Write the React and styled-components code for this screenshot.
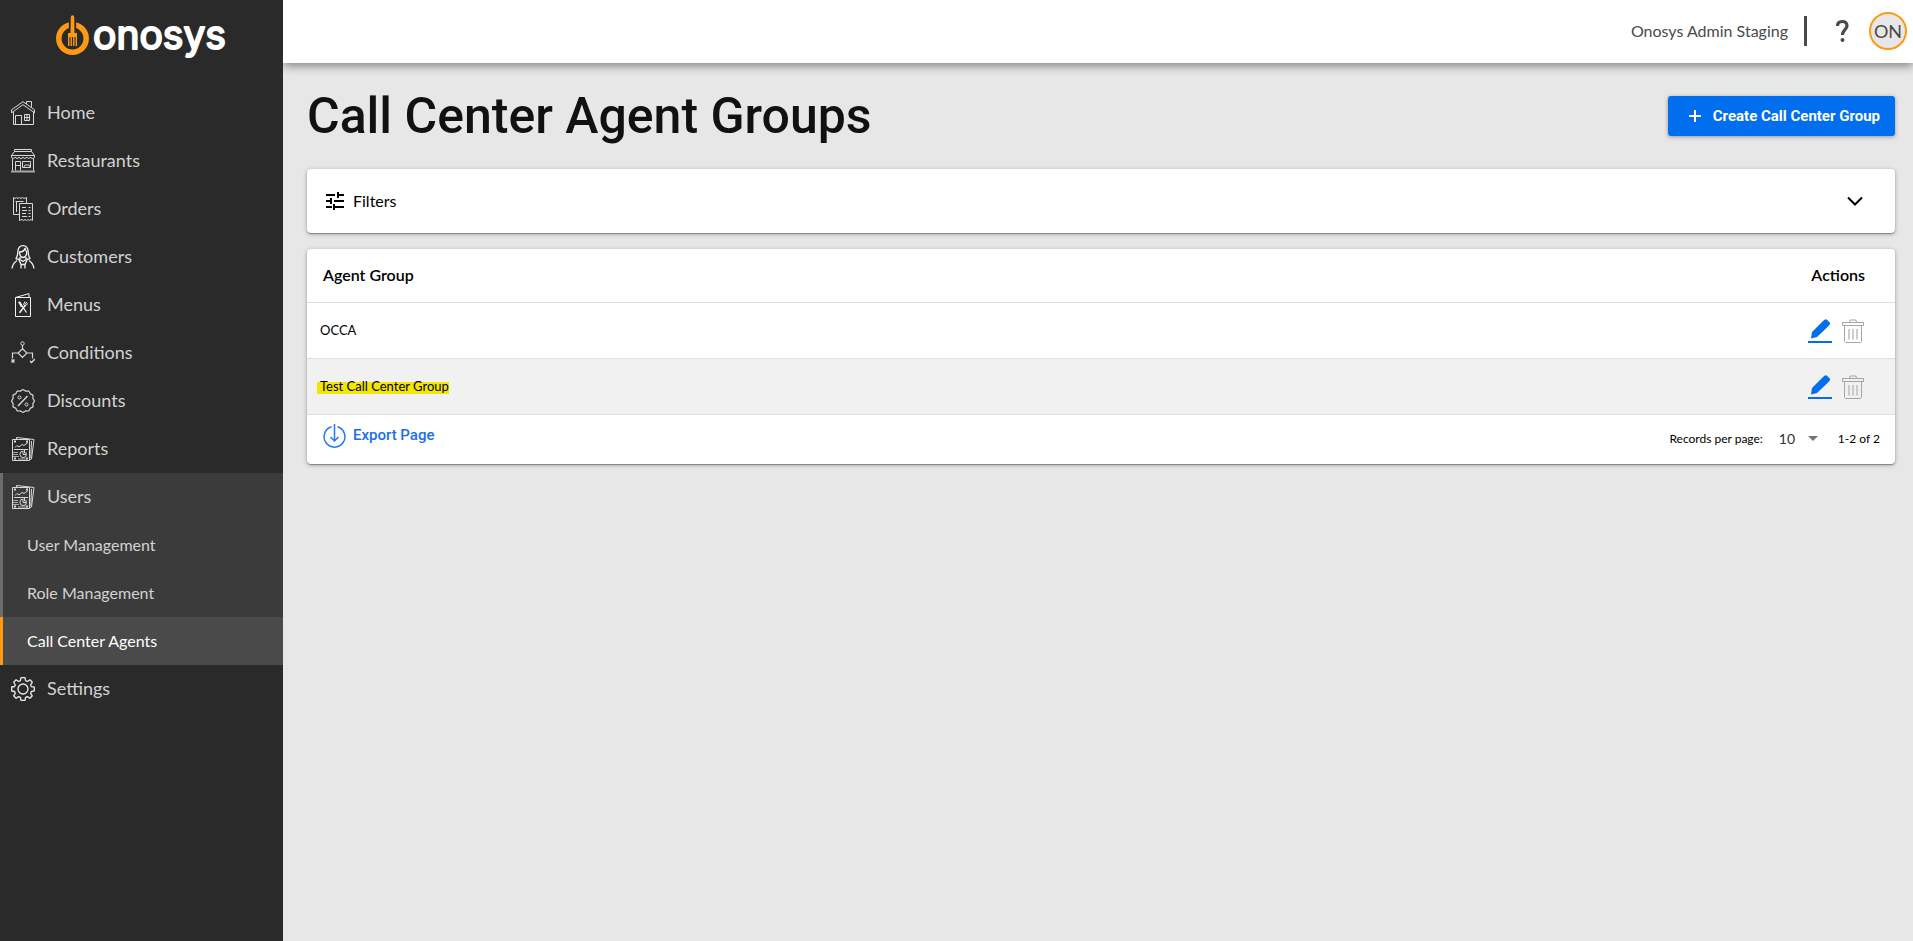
import React from "react";
import styled, { createGlobalStyle, css } from "styled-components";

const GlobalStyle = createGlobalStyle`
  *, *::before, *::after { box-sizing: border-box; }
  body {
    margin: 0;
    background: #e7e7e7;
    color: #000;
    font-family: Lato, "Liberation Sans", sans-serif;
    font-size: 16px;
  }
  button, select { font: inherit; color: inherit; }
  h1, ul { margin: 0; padding: 0; }
`;

const headingFont = css`
  font-family: Roboto, "Liberation Sans", sans-serif;
`;

const Shell = styled.div`
  display: flex;
  min-height: 100vh;
`;

const Sidebar = styled.aside`
  flex: 0 0 283px;
  background: #2a2a2a;
  color: #d2d2d2;
`;

const LogoLink = styled.a`
  display: flex;
  justify-content: center;
  height: 89px;
  padding-top: 12px;
`;

const NavList = styled.ul`
  list-style: none;
`;

const NavGroup = styled.li`
  background: ${(p) => (p.$open ? "#3b3b3b" : "transparent")};
`;

const NavLink = styled.a`
  display: flex;
  align-items: center;
  gap: 12px;
  height: 48px;
  padding-left: 8px;
  border-left: 3px solid ${(p) => (p.$open ? "#6c6c6c" : "transparent")};
  color: inherit;
  font-size: 18px;
  line-height: 24px;
  text-decoration: none;
`;

const NavLabel = styled.span`
  padding-bottom: 2px;
`;

const SubLink = styled(NavLink)`
  padding-left: 24px;
  font-size: 16px;
  border-left-color: ${(p) => (p.$active ? "#ff9914" : "#6c6c6c")};
  background: ${(p) => (p.$active ? "#4a4a4a" : "transparent")};
  color: ${(p) => (p.$active ? "#fff" : "inherit")};
`;

const Content = styled.div`
  flex: 1;
  min-width: 0;
`;

const TopBar = styled.header`
  display: flex;
  align-items: center;
  justify-content: flex-end;
  height: 63px;
  padding: 0 6px 2px 0;
  background: #fff;
  color: #4a4a4a;
  box-shadow: 0 2px 10px rgba(0, 0, 0, 0.5);
  clip-path: inset(0 0 -12px 0);
`;

const Divider = styled.span`
  width: 3px;
  height: 30px;
  margin: 0 25px 0 16px;
  background: #4a4a4a;
`;

const HelpButton = styled.button`
  display: flex;
  padding: 0;
  border: 0;
  background: none;
  margin-right: 17px;
`;

const Avatar = styled.button`
  width: 38px;
  height: 38px;
  padding: 0;
  border: 2px solid #ff9914;
  border-radius: 50%;
  background: #e7e7e7;
  font-size: 18px;
  line-height: 32px;
`;

const Main = styled.main`
  display: flex;
  flex-direction: column;
  gap: 16px;
  padding: 24px 18px 24px 24px;
`;

const TitleRow = styled.div`
  display: flex;
  align-items: flex-start;
  justify-content: space-between;
  height: 66px;
`;

const Title = styled.h1`
  ${headingFont}
  color: #111;
  font-size: 50px;
  font-weight: 500;
  line-height: 58px;
`;

const CreateButton = styled.button`
  ${headingFont}
  display: flex;
  align-items: center;
  gap: 12px;
  height: 40px;
  margin-top: 9px;
  padding: 0 15px 0 21px;
  border: 0;
  border-radius: 3px;
  background: #006eef;
  color: #fff;
  font-size: 15px;
  font-weight: 700;
  box-shadow: 0 1px 4px rgba(0, 0, 0, 0.35);
`;

const Card = styled.section`
  background: #fff;
  border-radius: 4px;
  box-shadow: 0 1px 4px rgba(0, 0, 0, 0.3), 0 1px 1px rgba(0, 0, 0, 0.3);
`;

const FilterToggle = styled.button`
  display: flex;
  align-items: center;
  gap: 9px;
  width: 100%;
  height: 64px;
  padding: 0 32px 1px 19px;
  border: 0;
  background: none;

  svg:last-child { margin-left: auto; }
`;

const Table = styled.table`
  width: 100%;
  border-collapse: collapse;
`;

const HeadCell = styled.th`
  height: 53px;
  padding: 0 30px 2px 16px;
  border-bottom: 1px solid #dedede;
  font-weight: 600;
  text-align: ${(p) => p.$align || "left"};
`;

const Cell = styled.td`
  height: 56px;
  padding: 0 30px 0 13px;
  border-bottom: 1px solid #dedede;
  font-size: 13px;
`;

const Row = styled.tr`
  background: ${(p) => (p.$striped ? "#f1f1f1" : "#fff")};
`;

const Highlight = styled.mark`
  margin-left: -3px;
  padding-left: 3px;
  color: inherit;
  background: linear-gradient(transparent 4px, #f3e600 4px);
`;

const Actions = styled.div`
  display: flex;
  justify-content: flex-end;
  gap: 9px;
  padding-top: 2px;
`;

const IconButton = styled.button`
  display: flex;
  padding: 0;
  border: 0;
  background: none;
`;

const Footer = styled.footer`
  display: flex;
  justify-content: space-between;
  height: 49px;
  padding: 0 15px 0 16px;
`;

const ExportButton = styled.button`
  ${headingFont}
  display: flex;
  align-items: flex-start;
  gap: 6px;
  padding: 8px 0 0;
  border: 0;
  background: none;
  color: #1a6fe8;
  font-size: 15px;
  font-weight: 500;
  line-height: 24px;
`;

const Pager = styled.div`
  display: flex;
  align-items: center;
  padding-bottom: 2px;
  font-size: 12px;
`;

const SelectWrap = styled.span`
  display: flex;
  align-items: center;
  margin: 0 20px 0 16px;

  svg { margin-left: -9px; pointer-events: none; }
`;

const PageSize = styled.select`
  appearance: none;
  width: 38px;
  padding: 0;
  border: 0;
  background: none;
  color: #333;
  font-size: 14px;
`;

function Icon({ children, size = 24, color = "#d8d8d8", ...rest }) {
  return (
    <svg width={size} height={size} viewBox="0 0 24 24" fill="none" stroke={color} aria-hidden="true" {...rest}>
      {children}
    </svg>
  );
}

const HomeIcon = () => (
  <Icon>
    <path d="M.5 11.8V8.8L12 .7l11.500 8.100v3L12 3.700Z" />
    <path d="M15.500 3V.5h5v6M2.500 10.800V23.500h20V10.800M4.500 23.500v-9h6v9M13.500 13.500h5v6h-5ZM16 13.500v6M13.500 16.500h5" />
  </Icon>
);

const StoreIcon = () => (
  <Icon>
    <path d="M3.500.5h17v2h-17ZM3.500 2.500.5 6.500h23l-3-4" />
    <path d="M.5 6.500v1.500a2 2 0 0 0 3.800 0 2 2 0 0 0 3.800 0 2 2 0 0 0 3.900 0 2 2 0 0 0 3.800 0 2 2 0 0 0 3.800 0 2 2 0 0 0 3.900 0v-1.500M1.500 9.500v12M22.500 9.500v12M4.500 21.500v-9h5v9M4.500 16.500h5M11.500 12.500h8v6h-8ZM13 18l1-2h4l1 2" />
    <path d="M0 22.500h24" strokeWidth="2" stroke="#a8a8a8" />
  </Icon>
);

const OrdersIcon = () => (
  <Icon>
    <path d="M8 17.500H2.500V.5l1.500 1 1.500-1 1.500 1 1.500-1 1.500 1 1.500-1 1.500 1 2.500-1V6M5.500 4v11M4.500 4.500h8" />
    <path d="M8.500 23.500v-17h13v17l-1.500-1-1.500 1-1.500-1-1.500 1-1.500-1-1.500 1-1.500-1Z" />
    <path d="M11 10.500h4M11 13.500h5M11 16.500h4M11 19.500h5M17.500 10.500h2M17.500 13.500h2M17.500 16.500h2M17.500 19.500h2" />
  </Icon>
);

const CustomerIcon = () => (
  <Icon color="#f2f2f2" strokeWidth="1.300">
    <path d="M12 .7c-4 0-5 3-5.200 6.300C6.700 10 6 12 5 13.500c1.500 1 2.500 1 4 .5v-2M12 .7c4 0 5 3 5.200 6.300.1 3 .8 5 1.800 6.500-1.500 1-2.500 1-4 .5v-2" />
    <path d="M8.500 7c3 0 5-1.500 5.500-4 .3 2 1 3 1.800 4-.2 3.500-1.800 5.500-3.800 5.500S8.600 10.500 8.500 7ZM9 14.500l3 2 3-2M6 15.500c-3 2-4.500 4.500-5 8M18 15.500c3 2 4.500 4.500 5 8M8 15l2 4.500v4M16 15l-2 4.500v4M10 19.500h4" />
  </Icon>
);

const MenuIcon = () => (
  <Icon color="#f2f2f2">
    <path d="M4.500 4.500h15v19h-15ZM4.500 4.500 18 .6v3.900" />
    <path d="m8.500 9 7 10.500" strokeWidth="1.300" />
    <path d="m8 8.800 2.800 5" strokeWidth="2" />
    <path d="M14.500 12 8.500 19.800" strokeWidth="1.500" />
    <path d="m14 8.500-1.500 3 1.500 1.500 3-2.500M15.800 9 14 11.500" />
  </Icon>
);

const ConditionIcon = () => (
  <Icon>
    <circle cx="11.500" cy="2.500" r="1.700" />
    <path d="M11.500 4v4M11.500 7.800 16 12l-4.500 4.500L7 12ZM7 12H1.500v5.500M16 12h5.500v5.500" strokeWidth="1.200" />
    <path d="m.5 18.500 3 3M3.500 18.500l-3 3M19 20l1.500 1.500L24 18" strokeWidth="1.500" />
  </Icon>
);

const DiscountIcon = () => (
  <Icon>
    <path d="m12 .6 2.700 1.500 3.100-.1 1.500 2.700L22 6.200l-.1 3.100L23.400 12l-1.500 2.700.1 3.100-2.700 1.500-1.500 2.700-3.100-.1L12 23.400l-2.700-1.500-3.100.1-1.500-2.700L2 17.800l.1-3.100L.6 12l1.500-2.700L2 6.200l2.700-1.500L6.200 2l3.100.1Z" strokeWidth="1.200" />
    <path d="M7 17 16.500 7" strokeWidth="1.400" />
    <circle cx="8.500" cy="8.500" r="1.500" />
    <circle cx="15.500" cy="15.500" r="1.500" />
  </Icon>
);

const ReportIcon = () => (
  <Icon>
    <path d="M5.500 2V.5l17.500 2L20.500 22 19 22.500M20.500 4l-.7 17" />
    <path d="M1.500 2.500h17v21h-17ZM4 10.500l2-2 2 1.500 3-2.500 2 1 4-3M3 12.500h14" />
    <path d="M3 4.500h2M15 4.500h2M3 21.500h2M15 21.500h2" strokeWidth="2" />
    <path d="M2 15.500h5M2 17.500h5M2 19.500h6M7 22h9" stroke="#aaa" />
    <path d="M12 14a3.300 3.300 0 1 0 3.500 3.500H12ZM13.500 13v3H16" />
  </Icon>
);

const GearIcon = () => (
  <Icon strokeWidth="1.300" color="#ececec">
    <path d="M10 .7h4l.6 3 1.900.8L19 2.800l2.300 2.400L19.600 8l.8 1.700 2.900.5v3.700l-2.900.6-.8 1.800 1.700 2.500-2.400 2.500-2.500-1.700-1.800.8-.6 3H10l-.6-3-1.800-.8-2.500 1.700-2.500-2.500 1.700-2.500-.7-1.800L.7 14v-4l2.900-.5L4.300 8 2.700 5.200 5.100 2.800l2.500 1.700 1.800-.8Z" strokeLinejoin="round" />
    <circle cx="12" cy="12" r="5" />
  </Icon>
);

function Logo() {
  return (
    <svg width="173" height="60" viewBox="0 0 173 60" role="img" aria-label="onosys">
      <circle cx="17.500" cy="26.500" r="13.700" fill="none" stroke="#ff9914" strokeWidth="5.500" />
      <path d="M13.800 8h7.400v12h-7.400Z" fill="#2a2a2a" />
      <path d="M15.800 5a1.700 1.700 0 0 1 3.400 0L19.500 21h2.500v4h-9v-4h2.500Z" fill="#ff9914" />
      <path d="M13.700 24v10M16.200 24v10M18.800 24v10M21.300 24v10" stroke="#ff9914" strokeWidth="1.400" />
      <text x="38" y="37" fill="#fff" stroke="#fff" strokeWidth="2" strokeLinejoin="round" fontFamily="Inter, sans-serif" fontWeight="400" fontSize="39">
        onosys
      </text>
    </svg>
  );
}

const PencilIcon = () => (
  <Icon color="none">
    <path d="M0 22h24v2H0Z" fill="#006eef" />
    <path d="M3 19.500 4 13 13.500 3.500l5.500 5L9 18ZM14.500 2.500 16.500.7c.8-.7 1.800-.7 2.500 0l2.500 2.500c.7.8.7 1.700 0 2.500L20 7.500Z M13.500 3.500l1-1L20 7.500l-1 1Z" fill="#006eef" />
  </Icon>
);

const TrashIcon = () => (
  <Icon size={24} color="#a5a5a5">
    <path d="M1.500 3.500h21v3h-21ZM8.500 3.500l.6-2.500h5.800l.6 2.500M3.500 6.500v16l1 1h15l1-1v-16" />
    <path d="M8 10v10.500M12 10v10.500M16 10v10.500" stroke="#bdbdbd" strokeWidth="1.500" />
  </Icon>
);

const ExportIcon = () => (
  <svg width="24" height="26" viewBox="0 0 24 26" fill="none" stroke="#1f7cf0" strokeWidth="1.500" aria-hidden="true">
    <path d="M8.500 3.800a10.400 10.400 0 1 0 6 0M11.500 1v16.500M7.500 14l4 4 4-4" />
  </svg>
);

const TuneIcon = () => (
  <Icon size={18} color="#000" viewBox="0 0 18 18" strokeWidth="2">
    <path d="M0 3h9M12 3h6M12 0v6M0 9h4M8 9h10M5 6v6M0 15h6M8 15h10M8 12v6" />
  </Icon>
);

const navItems = [
  { label: "Home", icon: HomeIcon },
  { label: "Restaurants", icon: StoreIcon },
  { label: "Orders", icon: OrdersIcon },
  { label: "Customers", icon: CustomerIcon },
  { label: "Menus", icon: MenuIcon },
  { label: "Conditions", icon: ConditionIcon },
  { label: "Discounts", icon: DiscountIcon },
  { label: "Reports", icon: ReportIcon },
  {
    label: "Users",
    icon: ReportIcon,
    children: ["User Management", "Role Management", "Call Center Agents"],
  },
  { label: "Settings", icon: GearIcon },
];

const groups = [{ name: "OCCA" }, { name: "Test Call Center Group", highlighted: true }];

export default function App() {
  return (
    <>
      <GlobalStyle />
      <Shell>
        <Sidebar>
          <LogoLink href="#home">
            <Logo />
          </LogoLink>
          <nav>
            <NavList>
              {navItems.map(({ label, icon: ItemIcon, children }) => (
                <NavGroup key={label} $open={!!children}>
                  <NavLink href="#" $open={!!children}>
                    <ItemIcon />
                    <NavLabel>{label}</NavLabel>
                  </NavLink>
                  {children && (
                    <NavList>
                      {children.map((child) => (
                        <li key={child}>
                          <SubLink href="#" $active={child === "Call Center Agents"}>
                            {child}
                          </SubLink>
                        </li>
                      ))}
                    </NavList>
                  )}
                </NavGroup>
              ))}
            </NavList>
          </nav>
        </Sidebar>

        <Content>
          <TopBar>
            <span>Onosys Admin Staging</span>
            <Divider />
            <HelpButton aria-label="Help">
              <svg width="20" height="24" viewBox="0 0 20 24" fill="none" stroke="#4a4a4a" strokeWidth="3.200" aria-hidden="true">
                <path d="M5.500 7c0-3 2-4.500 4.700-4.500S15 4 15 6.700c0 4-4.500 4-4.500 9.300" />
                <circle cx="10.500" cy="21" r="2" fill="#4a4a4a" stroke="none" />
              </svg>
            </HelpButton>
            <Avatar>ON</Avatar>
          </TopBar>

          <Main>
            <TitleRow>
              <Title>Call Center Agent Groups</Title>
              <CreateButton>
                <svg width="12" height="12" viewBox="0 0 12 12" stroke="#fff" strokeWidth="2" aria-hidden="true">
                  <path d="M0 6h12M6 0v12" />
                </svg>
                Create Call Center Group
              </CreateButton>
            </TitleRow>

            <Card>
              <FilterToggle aria-expanded="false">
                <TuneIcon />
                Filters
                <svg width="16" height="10" viewBox="0 0 16 10" fill="none" stroke="#000" strokeWidth="2" aria-hidden="true">
                  <path d="m1 1.500 7 7 7-7" />
                </svg>
              </FilterToggle>
            </Card>

            <Card>
              <Table>
                <thead>
                  <tr>
                    <HeadCell scope="col">Agent Group</HeadCell>
                    <HeadCell scope="col" $align="right">Actions</HeadCell>
                  </tr>
                </thead>
                <tbody>
                  {groups.map(({ name, highlighted }, index) => (
                    <Row key={name} $striped={index % 2 === 1}>
                      <Cell>{highlighted ? <Highlight>{name}</Highlight> : name}</Cell>
                      <Cell>
                        <Actions>
                          <IconButton aria-label={`Edit ${name}`}>
                            <PencilIcon />
                          </IconButton>
                          <IconButton aria-label={`Delete ${name}`}>
                            <TrashIcon />
                          </IconButton>
                        </Actions>
                      </Cell>
                    </Row>
                  ))}
                </tbody>
              </Table>
              <Footer>
                <ExportButton>
                  <ExportIcon />
                  Export Page
                </ExportButton>
                <Pager>
                  <label htmlFor="page-size">Records per page:</label>
                  <SelectWrap>
                    <PageSize id="page-size" defaultValue="10">
                      <option>10</option>
                      <option>25</option>
                      <option>50</option>
                    </PageSize>
                    <svg width="10" height="5" viewBox="0 0 10 5" aria-hidden="true">
                      <path d="M0 0h10L5 5Z" fill="#757575" />
                    </svg>
                  </SelectWrap>
                  <span>1-2 of 2</span>
                </Pager>
              </Footer>
            </Card>
          </Main>
        </Content>
      </Shell>
    </>
  );
}
